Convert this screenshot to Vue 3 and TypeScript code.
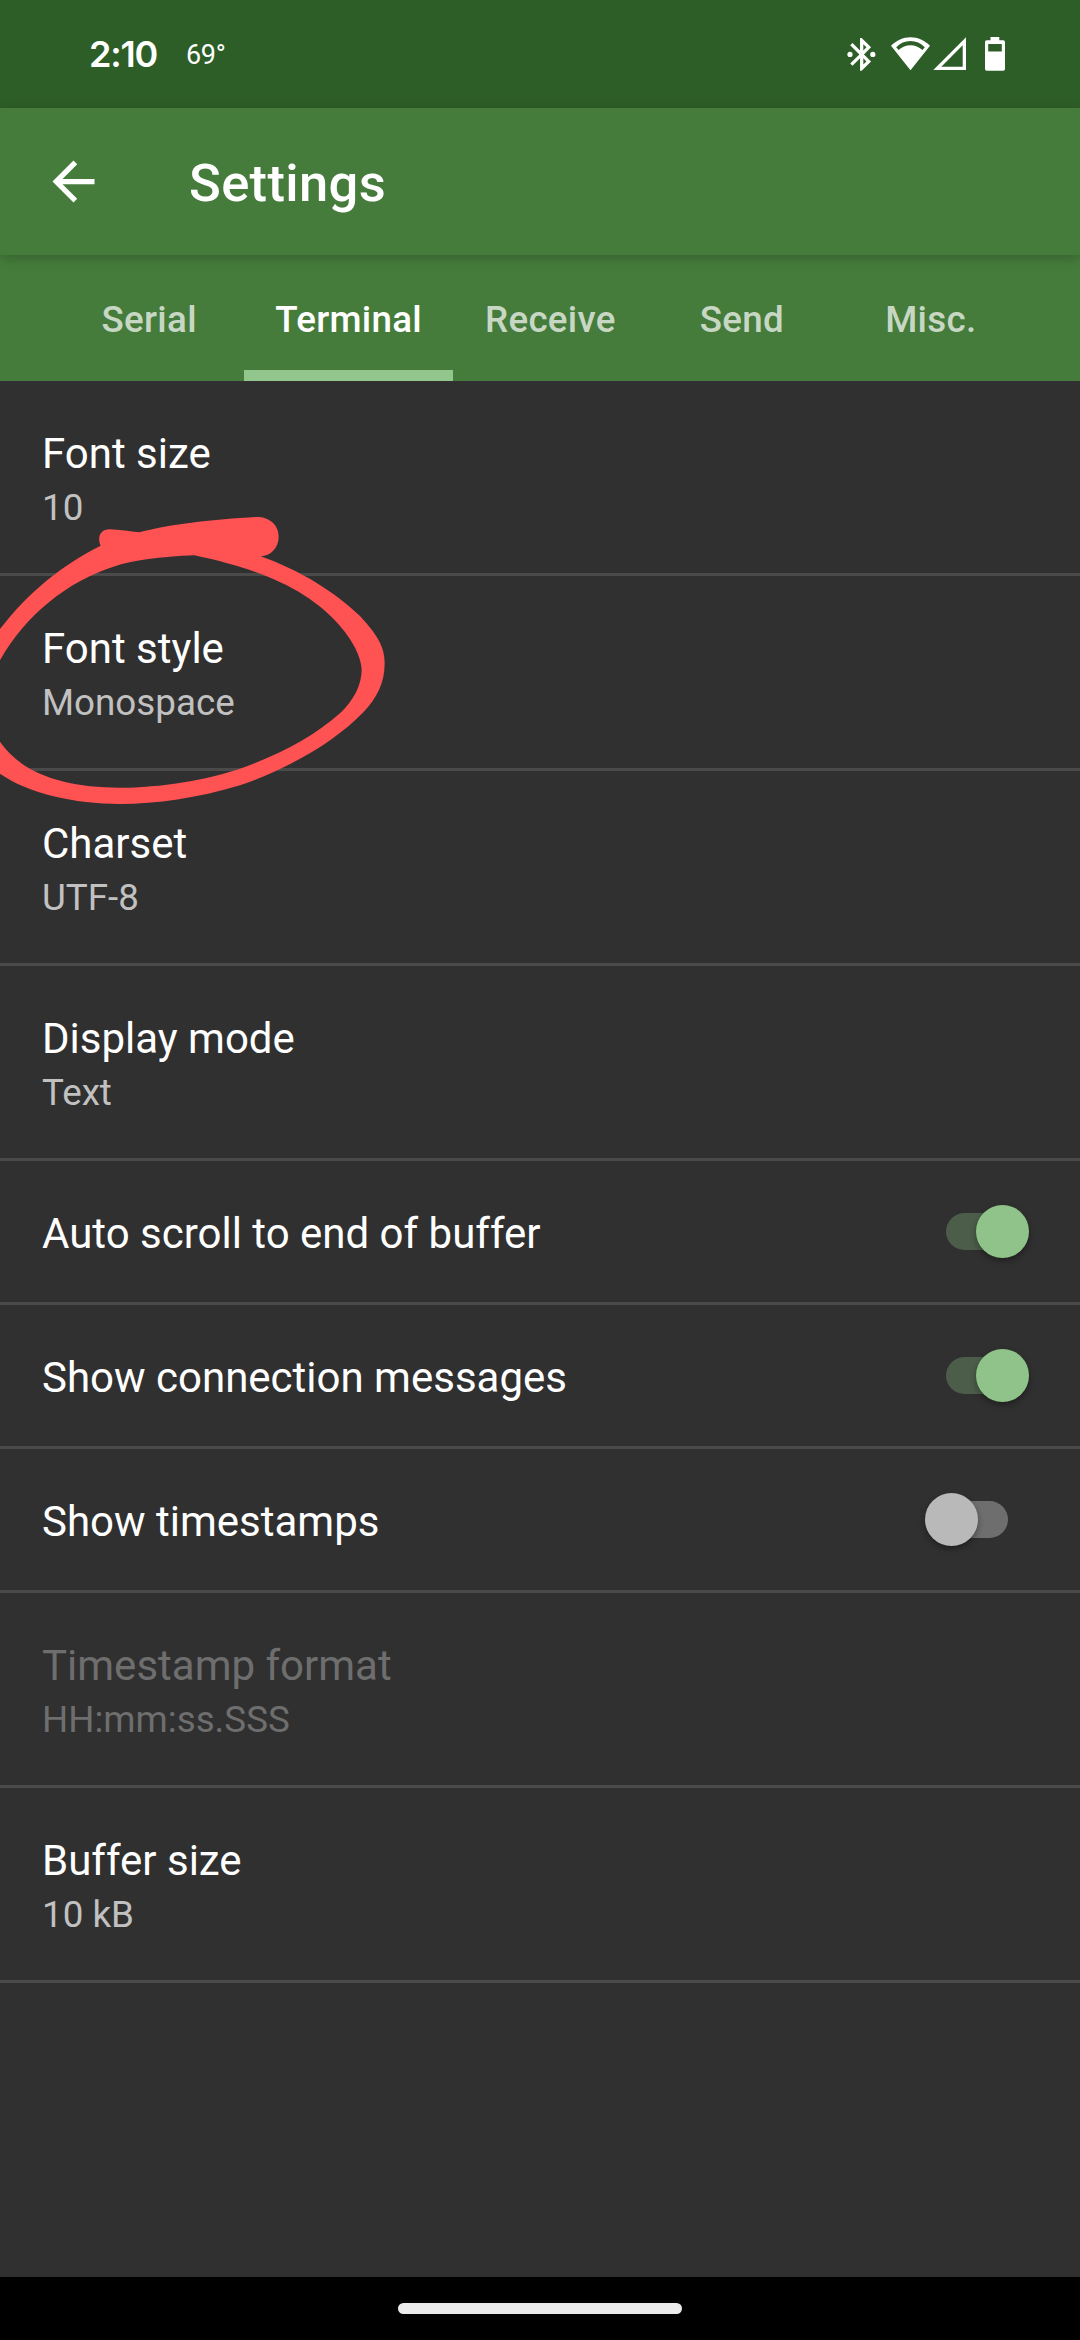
<script setup lang="ts">
interface Tab {
  label: string
  active?: boolean
}

interface Setting {
  title: string
  summary?: string
  toggle?: 'on' | 'off'
  disabled?: boolean
}

const tabs: Tab[] = [
  { label: 'Serial' },
  { label: 'Terminal', active: true },
  { label: 'Receive' },
  { label: 'Send' },
  { label: 'Misc.' },
]

const settings: Setting[] = [
  { title: 'Font size', summary: '10' },
  { title: 'Font style', summary: 'Monospace' },
  { title: 'Charset', summary: 'UTF-8' },
  { title: 'Display mode', summary: 'Text' },
  { title: 'Auto scroll to end of buffer', toggle: 'on' },
  { title: 'Show connection messages', toggle: 'on' },
  { title: 'Show timestamps', toggle: 'off' },
  { title: 'Timestamp format', summary: 'HH:mm:ss.SSS', disabled: true },
  { title: 'Buffer size', summary: '10 kB' },
]
</script>

<template>
  <div class="screen">
    <header class="status">
      <span class="time">2:10</span>
      <span class="temp">69°</span>
      <div class="status-icons">
        <svg class="bluetooth" viewBox="846 36 30 36" width="30" height="36">
          <path
            transform="translate(842 34.7) scale(1.64)"
            fill-rule="evenodd"
            d="M17.71 7.71L12 2h-1v7.59L6.41 5 5 6.41 10.59 12 5 17.59 6.41 19 11 14.41V22h1l5.71-5.71L13.41 12l4.3-4.29zM13 5.83l1.88 1.88L13 9.59V5.83zm1.88 10.46L13 18.17v-3.76l1.88 1.88z"
          />
          <circle cx="850" cy="54.4" r="2.6" />
          <circle cx="872.8" cy="54.4" r="2.6" />
        </svg>
        <svg class="wifi" viewBox="891 36 39 36" width="39" height="36">
          <path
            fill-rule="evenodd"
            d="M891 45.8C896.500 40.200 903 37.200 910.500 37.200S924.500 40.200 930 45.800L910.500 70.300ZM896.200 47.200L898.600 50.100C902 47 906 45.200 910.500 45.200S919 47 922.400 50.100L924.800 47.200C920.700 43.200 916 41 910.500 41S900.300 43.200 896.200 47.200Z"
          />
        </svg>
        <svg class="signal" viewBox="933 36 34 36" width="34" height="36">
          <path fill-rule="evenodd" d="M933.300 70H966V37.300ZM941.300 66.700H962.700V45.300Z" />
        </svg>
        <svg class="battery" viewBox="985 36 20 36" width="20" height="36">
          <path
            fill-rule="evenodd"
            d="M990.500 37H999.300V40.300H1003.200Q1005 40.300 1005 42.100V69Q1005 70.800 1003.200 70.800H986.800Q985 70.800 985 69V42.100Q985 40.300 986.800 40.300H990.500ZM988.200 44V51.500H1001.800V44Z"
          />
        </svg>
      </div>
    </header>

    <div class="toolbar">
      <svg class="back" viewBox="0 0 24 24" width="63" height="63">
        <path d="M20 11H7.830l5.590-5.590L12 4l-8 8 8 8 1.410-1.410L7.830 13H20v-2z" />
      </svg>
      <h1 class="heading">Settings</h1>
    </div>

    <nav class="tabs">
      <div v-for="tab in tabs" :key="tab.label" class="tab" :class="{ active: tab.active }">
        {{ tab.label }}
      </div>
    </nav>

    <main class="list">
      <section
        v-for="item in settings"
        :key="item.title"
        class="row"
        :class="{ single: item.toggle, disabled: item.disabled }"
      >
        <div class="texts">
          <div class="title">{{ item.title }}</div>
          <div v-if="item.summary" class="summary">{{ item.summary }}</div>
        </div>
        <div v-if="item.toggle" class="switch" :class="item.toggle">
          <span class="thumb"></span>
        </div>
      </section>

      <!-- Hand-drawn marker loop around "Font style" -->
      <svg class="marker" viewBox="0 0 1260 1320" width="420" height="440">
        <path
          d="M-5 724C80 610 190 522 302 467C290 440 303 418 328 418C358 419 390 425 418 427C510 402 640 388 768 381C808 380 836 404 836 440C836 474 812 497 782 499C900 540 1010 610 1080 678C1132 735 1154 770 1154 820C1154 880 1130 925 1090 967C1010 1050 880 1130 720 1186C590 1225 470 1242 360 1242C220 1242 80 1210 -5 1148L-5 1048C60 1150 190 1193 360 1193C480 1193 620 1170 720 1136C850 1090 940 1040 1020 970C1062 930 1085 885 1085 838C1083 800 1060 755 1020 708C930 605 800 542 583 496C480 500 400 510 340 530C200 575 70 680 -5 820Z"
        />
      </svg>
    </main>

    <footer class="navbar">
      <div class="pill"></div>
    </footer>
  </div>
</template>

<style>
body {
  background: #303030;
}
</style>

<style scoped>
.screen {
  display: flex;
  flex-direction: column;
  width: 1080px;
  height: 2340px;
  overflow: hidden;
  background: #303030;
  color: #fff;
  font-family: Roboto, 'Liberation Sans', sans-serif;
}

.status {
  display: flex;
  align-items: center;
  flex: none;
  box-sizing: border-box;
  height: 108px;
  padding: 0 75px 0 89px;
  background: #2e5e28;
}

.time {
  width: 97px;
  font-family: Inter, sans-serif;
  font-size: 36px;
  font-weight: 600;
  line-height: 44px;
  letter-spacing: -1.2px;
}

.temp {
  font-size: 27px;
  line-height: 32px;
  padding-top: 2px;
  letter-spacing: -0.3px;
}

.status-icons {
  display: flex;
  margin-left: auto;
  fill: #fff;
}

.wifi {
  margin-left: 15px;
}

.signal {
  margin-left: 3px;
}

.battery {
  margin-left: 18px;
}

.toolbar {
  display: flex;
  align-items: center;
  flex: none;
  position: relative;
  height: 147px;
  padding-left: 42px;
  background: #457c3b;
  box-shadow: 0 3px 12px rgba(0, 0, 0, 0.22);
}

.back {
  fill: #fff;
}

.heading {
  margin: 3px 0 0 84px;
  font-size: 52.500px;
  font-weight: 500;
  line-height: 62px;
  letter-spacing: 0.35px;
}

.tabs {
  display: flex;
  justify-content: center;
  flex: none;
  height: 126px;
  background: #457c3b;
}

.tab {
  box-sizing: border-box;
  min-width: 189px;
  padding: 0 31.500px;
  border-bottom: 11px solid transparent;
  color: #c7d7c4;
  font-size: 36.750px;
  font-weight: 500;
  line-height: 129px;
  letter-spacing: 0.3px;
  text-align: center;
}

.tab.active {
  border-bottom-color: #93c68c;
  color: #fff;
}

.list {
  position: relative;
  flex: 1;
}

.row {
  display: flex;
  justify-content: space-between;
  box-sizing: border-box;
  height: 195px;
  padding: 48px 42px 0;
  border-bottom: 3px solid #4a4a4a;
}

.row.single {
  height: 144px;
}

.title {
  font-size: 42px;
  line-height: 50px;
}

.summary {
  margin-top: 7px;
  color: #c1c1c1;
  font-size: 36.750px;
  line-height: 43px;
}

.disabled .title,
.disabled .summary {
  color: #6e6e6e;
}

.switch {
  display: flex;
  align-items: center;
  box-sizing: border-box;
  width: 62px;
  height: 37px;
  margin: 4px 30px 0 0;
  border-radius: 18.500px;
}

.switch.on {
  justify-content: flex-end;
  background: #4c5e4a;
}

.switch.off {
  background: #6e6e6e;
}

.thumb {
  flex: none;
  width: 53px;
  height: 53px;
  border-radius: 50%;
  box-shadow: 0 3px 6px rgba(0, 0, 0, 0.35);
}

.on .thumb {
  margin-right: -21px;
  background: #8fc389;
}

.off .thumb {
  margin-left: -21px;
  background: #b9b9b9;
}

.marker {
  position: absolute;
  left: 0;
  top: 9px;
  fill: #ff5252;
}

.navbar {
  display: flex;
  justify-content: center;
  flex: none;
  box-sizing: border-box;
  height: 63px;
  padding-top: 26px;
  background: #000;
}

.pill {
  width: 284px;
  height: 11px;
  border-radius: 5.500px;
  background: #ebebeb;
}
</style>
